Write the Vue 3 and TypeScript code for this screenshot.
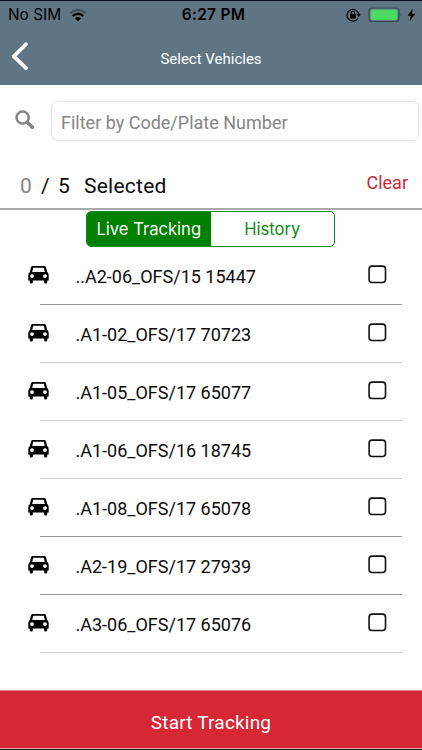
<script setup lang="ts">
import { ref } from 'vue'

interface Vehicle { label: string; line: string; selected: boolean }

const filter = ref('')
const mode = ref<'live' | 'history'>('live')
const vehicles = ref<Vehicle[]>([
  { label: '..A2-06_OFS/15 15447', line: 'mid', selected: false },
  { label: '.A1-02_OFS/17 70723', line: 'light', selected: false },
  { label: '.A1-05_OFS/17 65077', line: 'light', selected: false },
  { label: '.A1-06_OFS/16 18745', line: 'light', selected: false },
  { label: '.A1-08_OFS/17 65078', line: 'mid', selected: false },
  { label: '.A2-19_OFS/17 27939', line: 'mid', selected: false },
  { label: '.A3-06_OFS/17 65076', line: 'light', selected: false },
])
</script>

<template>
  <div class="screen">
    <header class="top">
      <div class="status">
        <div class="carrier">
          <span class="sim">No SIM</span>
          <svg class="wifi" width="18" height="13" viewBox="0 0 18 13" fill="none">
            <path d="M1 4.2Q9-2.2 17 4.2" stroke="#3f4e59" stroke-width="2" />
            <path d="M3.6 7Q9 2.5 14.4 7" stroke="#000" stroke-width="2.2" />
            <path d="M5.9 9.3Q9 6.8 12.1 9.3L9 12.6Z" fill="#000" />
          </svg>
        </div>
        <span class="time">6:27 PM</span>
        <div class="power">
          <svg width="15" height="14" viewBox="0 0 15 14" fill="none">
            <path d="M11.8 10.6A5.9 5.9 0 1 1 12.8 6.6" stroke="#000" stroke-width="1.2" />
            <path d="M10.6 6.2H15L12.8 9Z" fill="#000" />
            <rect x="4" y="6" width="5.8" height="4.4" rx=".6" fill="#000" />
            <path d="M5.2 6V4.9a1.7 1.7 0 0 1 3.4 0V6" stroke="#000" stroke-width="1.1" />
          </svg>
          <svg width="35" height="16" viewBox="0 0 35 16">
            <rect x="1" y="1" width="30" height="13.5" rx="3.3" fill="none" stroke="#384650" stroke-width="1.2" />
            <rect x="2.6" y="2.6" width="26.8" height="10.4" rx="1.8" fill="#4cd964" />
            <path d="M32.6 5.6q1.6 2.1 0 4.3Z" fill="#384650" />
          </svg>
          <svg width="9" height="14" viewBox="0 0 9 14"><path d="M5.8.5L.6 7.7h3.2L2.5 13.3 8.4 5.8H4.9Z" fill="#000" /></svg>
        </div>
      </div>
      <div class="nav">
        <svg class="back" width="18" height="29" viewBox="0 0 18 29" fill="none">
          <path d="M15 2.2L2.8 14.4 15 26.2" stroke="#fff" stroke-width="3.7" stroke-linecap="round" stroke-linejoin="round" />
        </svg>
        <h1>Select Vehicles</h1>
      </div>
    </header>

    <div class="search">
      <svg width="20" height="20" viewBox="0 0 20 20" fill="none" stroke="#858585">
        <circle cx="7.6" cy="7.6" r="6.1" stroke-width="2.5" />
        <path d="M12.3 12.3L17.4 17.2" stroke-width="3.6" stroke-linecap="round" />
      </svg>
      <input v-model="filter" placeholder="Filter by Code/Plate Number" />
    </div>

    <div class="summary">
      <div class="count"><span class="n">0</span><span class="slash">/</span><span class="total">5</span><span class="word">Selected</span></div>
      <button class="clear">Clear</button>
    </div>

    <div class="segments">
      <button :class="{ on: mode === 'live' }" @click="mode = 'live'">Live Tracking</button>
      <button :class="{ on: mode === 'history' }" @click="mode = 'history'">History</button>
    </div>

    <ul class="list">
      <li v-for="v in vehicles" :key="v.label" :class="v.line" @click="v.selected = !v.selected">
        <svg class="car" width="21" height="18" viewBox="0 0 21 18">
          <path fill-rule="evenodd" d="M4.8 0H16.2Q17.5 0 17.9 1.2L19.2 6Q20.7 7 20.7 9.2V14.4H19.3V16.1Q19.3 17.6 17.7 17.6T16.1 16.1V14.4H4.9V16.1Q4.9 17.6 3.3 17.6T1.7 16.1V14.4H.3V9.2Q.3 7 1.8 6L3.1 1.2Q3.5 0 4.8 0ZM5.2 1.7L4.2 6H16.8L15.8 1.7ZM4 8.2A1.9 1.9 0 1 0 4 12 1.9 1.9 0 0 0 4 8.2ZM17 8.2A1.9 1.9 0 1 0 17 12 1.9 1.9 0 0 0 17 8.2Z" />
        </svg>
        <span class="plate">{{ v.label }}</span>
        <svg class="box" width="19" height="19" viewBox="0 0 19 19">
          <rect x="1.1" y="1.1" width="16.4" height="16.4" rx="3" :fill="v.selected ? '#111' : 'none'" stroke="#111" stroke-width="1.6" />
        </svg>
      </li>
    </ul>

    <button class="start">Start Tracking</button>
  </div>
</template>

<style>
body { margin: 0; background: #fff; }
</style>

<style scoped>
.screen { width: 422px; height: 750px; box-sizing: border-box; display: flex; flex-direction: column; background: #fefefe; border-bottom: 1px solid #2a151b; font-family: Roboto, "Liberation Sans", sans-serif; color: #0b0b0b; overflow: hidden; }
button { border: 0; padding: 0; margin: 0; background: none; font: inherit; }
.top { height: 85px; box-sizing: border-box; flex: none; background: #607584; border-top: 1px solid #08101f; }
.status { height: 28px; display: grid; grid-template-columns: 1fr auto 1fr; align-items: center; font-family: Inter, sans-serif; color: #000; line-height: 28px; }
.carrier { display: flex; align-items: center; padding-left: 8px; }
.sim { font-size: 15.4px; letter-spacing: 0; }
.wifi { margin-left: 8px; }
.time { font-size: 15.4px; font-weight: 600; letter-spacing: .3px; padding-left: 5px; }
.power { display: flex; justify-content: flex-end; align-items: center; padding-right: 6px; gap: 7px; }
.power svg:last-child { margin-left: -3px; }
.nav { height: 56px; display: grid; grid-template-columns: 40px 1fr 40px; align-items: start; color: #fff; }
.back { margin: 13px 0 0 11px; }
h1 { margin: 20px 0 0; text-align: center; font-size: 15px; line-height: 20px; font-weight: 400; }
.search { flex: none; height: 75px; box-sizing: border-box; padding: 16px 3px 0 15px; display: flex; align-items: flex-start; }
.search svg { flex: none; margin-top: 9px; }
input { flex: 1; min-width: 0; height: 40px; box-sizing: border-box; margin-left: 16px; padding: 2px 9px 0; border: 1px solid #e4e4e4; border-radius: 7px; background: #fff; outline: 0; font: 400 18px Roboto, sans-serif; color: #222; }
input::placeholder { color: #858585; opacity: 1; }
.summary { flex: none; height: 50px; box-sizing: border-box; border-bottom: 2px solid #aaa; display: flex; justify-content: space-between; padding: 10px 14px 0 20px; }
.count { display: flex; font-size: 21px; line-height: 32px; }
.n { color: #858585; width: 21px; }
.slash { width: 17px; }
.total { width: 26px; }
.word { letter-spacing: .25px; }
.clear { height: 26px; line-height: 26px; font-size: 18px; color: #c92a3a; }
.segments { flex: none; width: 249px; height: 36px; box-sizing: border-box; margin: 1px 0 0 86px; border: 1px solid #118a18; border-radius: 5px; overflow: hidden; display: grid; grid-template-columns: 1fr 1fr; }
.segments button { font: 400 16.6px Inter, sans-serif; color: #118a18; letter-spacing: 0; }
.segments .on { background: #008000; color: #fff; }
.list { flex: none; list-style: none; margin: 0; padding: 0 20px 0 40px; }
li { height: 58px; box-sizing: border-box; display: flex; align-items: flex-start; border-bottom: 1px solid #ccc; }
li.mid { border-color: #999; }
.car { flex: none; margin: 19px 0 0 -12.5px; }
.plate { flex: 1; margin: 18px 0 0 27px; font-size: 18px; line-height: 24px; white-space: nowrap; }
.box { flex: none; margin: 18px 15px 0 0; }
.start { flex: none; height: 59px; margin-top: auto; background: #d62734; border-top: 1px solid #e58a91; border-bottom: 1px solid #e7a4a9; color: #fff; font-size: 19px; letter-spacing: .2px; padding-top: 5px; }
</style>
